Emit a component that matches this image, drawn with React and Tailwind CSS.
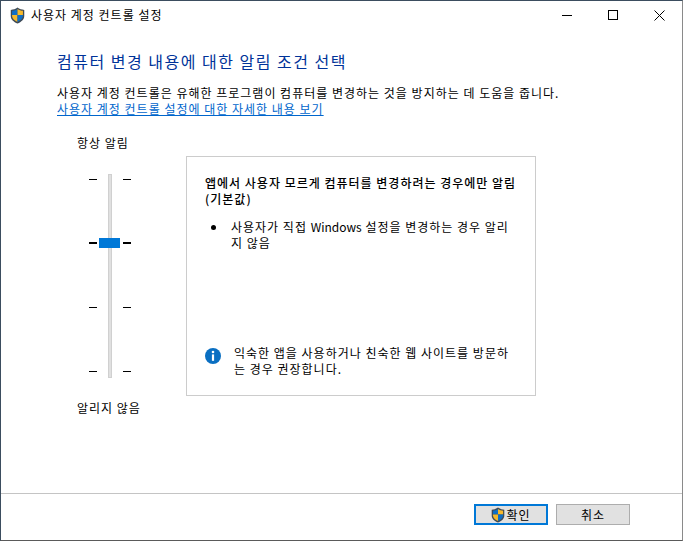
import React from 'react';

const font = { fontFamily: '"Noto Sans CJK KR", "Liberation Sans", sans-serif' };

function Shield({ className }) {
  return (
    <svg className={className} viewBox="0 0 16 18">
      <path d="M8 0.5C6 2 3.5 2.8 0.8 3v6.5c0 3.6 3 6.4 7.2 8 4.2-1.6 7.2-4.4 7.2-8V3C12.5 2.8 10 2 8 0.5z" fill="#3f4a55" />
      <path d="M8 2 C6.3 3.1 4.2 3.8 2.2 4v4.5H8z" fill="#0f6fc6" />
      <path d="M8 2c1.7 1.1 3.8 1.8 5.8 2v4.5H8z" fill="#f6b92b" />
      <path d="M2.2 8.5H8v7.4C4.7 14.4 2.4 12.1 2.2 9.5z" fill="#f6b92b" />
      <path d="M13.8 8.5H8v7.4c3.3-1.5 5.6-3.8 5.8-6.4z" fill="#0f6fc6" />
    </svg>
  );
}

function Tick({ active }) {
  const bar = active ? 'w-2 h-[2px] bg-black' : 'w-2 h-px bg-black';
  return (
    <div className="flex items-center justify-between w-[42px] h-[10px]">
      <div className={bar} />
      <div className={bar} />
    </div>
  );
}

function Slider() {
  return (
    <div className="relative w-[42px] h-[204px] ml-[12px] mt-[23px]">
      <div className="absolute left-[19px] top-0 w-[4px] h-[204px] bg-[#e0e0e0] border border-[#d0d0d0]" />
      <div className="absolute left-[10px] top-[64px] w-[21px] h-[10px] bg-[#0078d7]" />
      <div className="relative flex flex-col justify-between h-[202px]">
        <Tick />
        <Tick active />
        <Tick />
        <Tick />
      </div>
    </div>
  );
}

export default function App() {
  return (
    <div style={font} className="w-[683px] h-[541px] bg-white flex flex-col border border-t-[#3b4d5f] border-l-[#3b4d5f] border-r-[#8a8a8a] border-b-[#5a5a5a] text-[12px] leading-[16px] tracking-[1px] text-black overflow-hidden">
      {/* Title bar */}
      <div className="flex items-center h-[28px] shrink-0">
        <Shield className="w-[15px] h-[17px] ml-[9px]" />
        <span className="ml-[6px]">사용자 계정 컨트롤 설정</span>
        <div className="ml-auto flex items-center">
          <div className="w-[46px] h-[28px] flex items-center justify-center">
            <div className="w-[10px] h-px bg-black" />
          </div>
          <div className="w-[46px] h-[28px] flex items-center justify-center">
            <div className="w-[10px] h-[10px] border border-black" />
          </div>
          <div className="w-[46px] h-[28px] flex items-center justify-center">
            <svg className="w-[11px] h-[11px]" viewBox="0 0 11 11" fill="none" stroke="black" strokeWidth="1">
              <path d="M0.5 0.5l10 10M10.5 0.5l-10 10" />
            </svg>
          </div>
        </div>
      </div>

      {/* Body */}
      <div className="flex-1 pl-[56px] pr-[20px]">
        <h1 className="mt-[20px] text-[16px] leading-[24px] tracking-[1.5px] font-normal text-[#003399]">컴퓨터 변경 내용에 대한 알림 조건 선택</h1>
        <p className="mt-[12px] whitespace-nowrap">사용자 계정 컨트롤은 유해한 프로그램이 컴퓨터를 변경하는 것을 방지하는 데 도움을 줍니다.</p>
        <a className="block text-[#0066cc] underline">사용자 계정 컨트롤 설정에 대한 자세한 내용 보기</a>

        <div className="flex items-start mt-[11px]">
          <div className="w-[129px] shrink-0 pl-[20px]">
            <div className="mt-[7px]">항상 알림</div>
            <Slider />
            <div className="mt-[22px]">알리지 않음</div>
          </div>

          <div className="w-[350px] h-[240px] mt-[28px] border border-[#cccccc] flex flex-col pl-[18px] pr-[10px] whitespace-nowrap">
            <div className="mt-[18px] font-medium">앱에서 사용자 모르게 컴퓨터를 변경하려는 경우에만 알림<br />(기본값)</div>
            <div className="flex mt-[12px]">
              <div className="w-[26px] shrink-0 pl-[6px] pt-[6px]">
                <div className="w-[5px] h-[5px] rounded-full bg-black" />
              </div>
              <div>사용자가 직접 <span className="tracking-normal">Windows</span> 설정을 변경하는 경우 알리<br />지 않음</div>
            </div>
            <div className="flex mt-auto mb-[18px]">
              <svg className="w-[16px] h-[16px] shrink-0 mt-[3px]" viewBox="0 0 16 16">
                <circle cx="8" cy="8" r="8" fill="#0a6fc2" />
                <circle cx="8" cy="4" r="1.3" fill="white" />
                <rect x="6.9" y="6.4" width="2.2" height="6.4" fill="white" />
              </svg>
              <div className="ml-[13px]">익숙한 앱을 사용하거나 친숙한 웹 사이트를 방문하<br />는 경우 권장합니다.</div>
            </div>
          </div>
        </div>
      </div>

      {/* Footer */}
      <div className="h-[47px] shrink-0 border-t border-[#c4c4c4] flex items-start justify-end gap-[8px] pt-[10px] pr-[52px]">
        <button className="w-[74px] h-[21px] bg-[#e1e1e1] border-2 border-[#0078d7] flex items-center justify-center">
          <Shield className="w-[14px] h-[16px] mr-[1px]" />
          <span>확인</span>
        </button>
        <button className="w-[74px] h-[21px] bg-[#e1e1e1] border border-[#adadad] flex items-center justify-center">취소</button>
      </div>
    </div>
  );
}
